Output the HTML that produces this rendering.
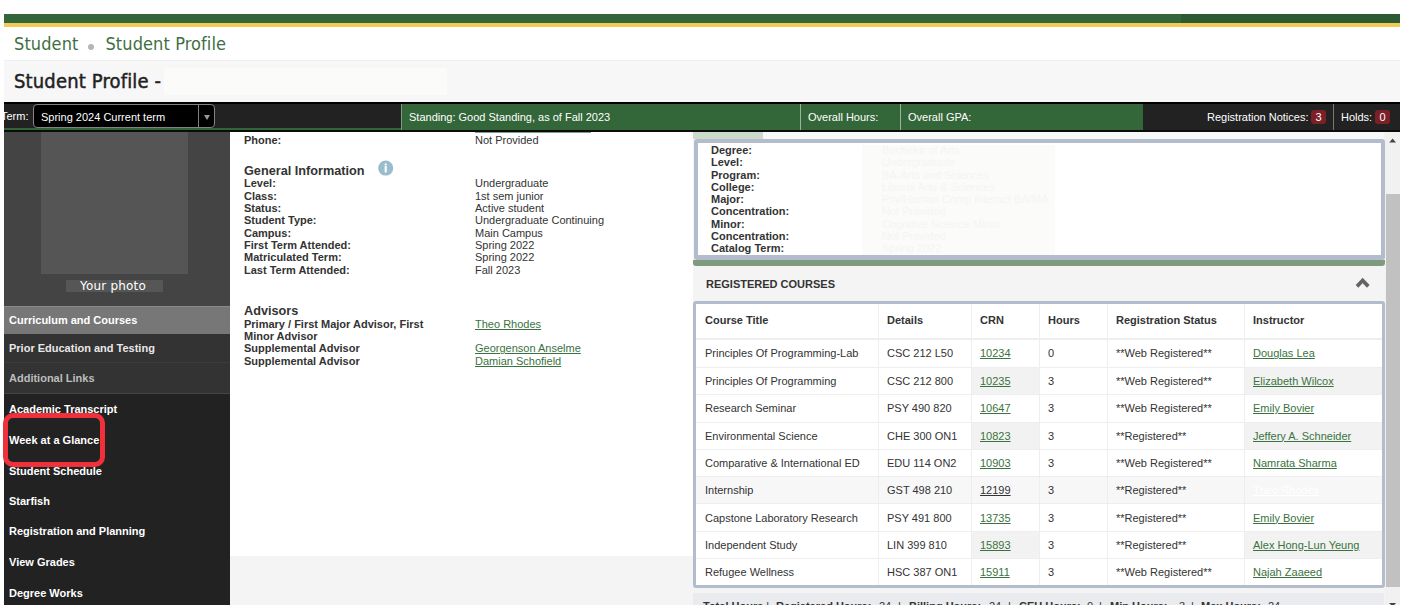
<!DOCTYPE html>
<html lang="en">
<head>
<meta charset="utf-8">
<title>Student Profile</title>
<style>
*{box-sizing:border-box;margin:0;padding:0}
html,body{width:1420px;height:605px;overflow:hidden;background:#fff}
body{font-family:"Liberation Sans",Arial,sans-serif;font-size:11px;color:#333;position:relative}
.abs{position:absolute}
a{color:#3a7240}
/* top bars */
#gbar{left:4px;top:14px;width:1396px;height:9px;background:#33663a}
#gbar2{left:1181px;top:14px;width:219px;height:9px;background:#2d5a33}
#ybar{left:4px;top:23px;width:1396px;height:4px;background:#f1cb55}
#crumb{left:14px;top:32px;font-family:"DejaVu Sans Condensed","DejaVu Sans",sans-serif;font-size:18px;letter-spacing:0.1px;color:#3d6f43;white-space:nowrap;line-height:24px}
#crumb .dot{display:inline-block;width:6px;height:6px;border-radius:3px;background:#b5b5b5;margin:0 11px 0 10px;position:relative;top:0px}
#titlebar{left:4px;top:60px;width:1396px;height:42px;background:#f7f7f7;border-top:1px solid #f0f0f0}
#titlebar .red{position:absolute;left:160px;top:7px;width:283px;height:27px;background:#fbfbfa}
#title{left:14px;top:67px;font-family:"DejaVu Sans Condensed","DejaVu Sans",sans-serif;font-weight:normal;font-size:20px;color:#222;-webkit-text-stroke:0.45px #222;letter-spacing:0.15px;white-space:nowrap;line-height:28px}
/* status bar */
#sbar{left:4px;top:102px;width:1396px;height:30px;background:#222;border-top:2px solid #000;border-bottom:2px solid #0c0c0c}
#sgreen{left:401px;top:104px;width:742px;height:26px;background:#336639;border-left:1px solid #7e9a82}
#sbarline{left:4px;top:128px;width:397px;height:2px;background:#2f6537}
.sb{position:absolute;top:104px;height:26px;line-height:26px;color:#fff;font-size:11px;white-space:nowrap}
.vdiv{position:absolute;top:104px;width:1px;height:26px;background:#9db3a0}
.badge{position:absolute;top:110px;width:15px;height:14px;line-height:14px;border-radius:3px;background:#7d1f27;color:#fff;text-align:center;font-size:11px}
#sel{left:33px;top:104px;width:182px;height:24px;border:1px solid #828282;border-radius:4px;background:#000;color:#fff;line-height:24px;padding-left:7px;font-size:11px;overflow:hidden}
#sel .dv{position:absolute;left:164px;top:0;width:1px;height:22px;background:#828282}
#sel .ar{position:absolute;left:169.5px;top:10px;width:0;height:0;border-left:3px solid transparent;border-right:3px solid transparent;border-top:5px solid #999}
/* sidebar */
#side{left:4px;top:132px;width:226px;height:473px;background:#222}
#phwrap{left:4px;top:132px;width:226px;height:174px;background:#444}
#photo{left:41px;top:132px;width:147px;height:142px;background:#555}
#phlab{left:66px;top:280px;width:97px;height:12px;background:#565656;color:#fff;font-family:"DejaVu Sans",sans-serif;font-size:12px;letter-spacing:0.2px;line-height:12px;text-align:center;padding-right:3px}
.mi{position:absolute;left:4px;width:226px;color:#fff;font-weight:bold;font-size:11px;padding-left:5px;white-space:nowrap}
#m1{top:306px;height:28px;line-height:27px;background:#777;border-top:1px solid #8a8a8a}
#m2{top:334px;height:28px;line-height:28px;background:#333;color:#e8e8e8}
#m3{top:362px;height:32px;line-height:30px;background:#333;color:#bdbdbd;border-top:1px solid #3c3c3c;border-bottom:1px solid #444}
.lk{position:absolute;left:9px;color:#fff;font-weight:bold;font-size:11px;line-height:14px;white-space:nowrap}
#redbox{left:2.5px;top:413px;width:102px;height:53.5px;border:5px solid #f0313c;border-radius:10px}
/* middle */
#mid{left:230px;top:132px;width:462.5px;height:424px;background:#fff}
#midb{left:230px;top:556px;width:462.5px;height:49px;background:#f4f4f4}
.lab{position:absolute;left:244px;font-weight:bold;color:#333;font-size:11px;line-height:12.4px;white-space:nowrap}
.val{position:absolute;left:475px;color:#333;font-size:11px;line-height:12.4px;white-space:nowrap}
.h3{position:absolute;left:244px;font-weight:bold;color:#333;font-size:12.7px;line-height:16px;white-space:nowrap}
/* right */
#right{left:692.5px;top:132px;width:692.5px;height:473px;background:#f4f4f4}
#scroll{left:1385px;top:132px;width:15px;height:473px;background:#f1f1f1}
#thumb{left:1385.5px;top:194px;width:14.5px;height:393px;background:#c1c1c1}

/* degree box */
#rtop{left:691px;top:132px;width:693px;height:8px;background:#f7f8fa}
#rtopg{left:693px;top:132px;width:70px;height:7px;background:#cbdacb}
#dbox{left:693.5px;top:139.3px;width:691.5px;height:121px;border:4.5px solid #b3bccd;border-bottom-width:5px;border-radius:3px;background:#fff}
#dred{left:862px;top:145px;width:192.5px;height:110px;background:#fbfbfa}
#gline{left:693px;top:260px;width:692px;height:6px;background:#7f9b7f;border-radius:0 0 3px 3px}
.dl{position:absolute;left:711px;font-weight:bold;color:#333;font-size:11px;line-height:12px;white-space:nowrap}
.dv2{position:absolute;left:882px;color:#f5f5f3;font-size:11px;line-height:12px;white-space:nowrap}
#rch{left:706px;top:277px;font-weight:bold;font-size:11px;line-height:14px;color:#333;white-space:nowrap}
#tbox{left:693px;top:301px;width:691.5px;height:287px;border:3px solid #b3bccd;border-radius:3px;background:#fff}
table{position:absolute;left:696px;top:303.8px;width:685.5px;border-collapse:separate;border-spacing:0;table-layout:fixed;font-size:11px;color:#333}
th{height:36px;text-align:left;font-weight:bold;padding:0 0 1px 9px;border-left:1px solid #eee;border-bottom:2px solid #eee;vertical-align:middle}
td{height:27.27px;padding:0 0 0 9px;border-left:1px solid #eee;border-top:1px solid #eee;vertical-align:middle;white-space:nowrap}
th:first-child,td:first-child{border-left:none}
th+th,td+td{padding-left:8px}
tr.e td.g{background:#f2f2f2}
tr.h td{background:#f7f7f7}
tr.first td{border-top:none}
#foot{left:692.5px;top:592.5px;width:691px;height:13px;background:#e9ebef}
.ft{position:absolute;top:600px;font-size:11px;line-height:13px;color:#333;white-space:nowrap}
.ft b{font-weight:bold}
</style>
</head>
<body>
<div class="abs" id="gbar"></div><div class="abs" id="gbar2"></div><div class="abs" id="ybar"></div>
<div class="abs" id="crumb">Student<span class="dot"></span>Student Profile</div>
<div class="abs" id="titlebar"><div class="red"></div></div>
<div class="abs" id="title">Student Profile -</div>

<div class="abs" id="sbar"></div>
<div class="abs" id="sgreen"></div>
<div class="abs" id="sbarline"></div>
<div class="sb" style="left:1px;top:103px">Term:</div>
<div class="abs" id="sel">Spring 2024 Current term<span class="dv"></span><span class="ar"></span></div>
<div class="sb" style="left:409px">Standing: Good Standing, as of Fall 2023</div>
<div class="vdiv" style="left:800px"></div>
<div class="sb" style="left:808px">Overall Hours:</div>
<div class="vdiv" style="left:900px"></div>
<div class="sb" style="left:908px">Overall GPA:</div>
<div class="sb" style="left:1207px">Registration Notices:</div>
<div class="badge" style="left:1311px">3</div>
<div class="vdiv" style="left:1333px;background:#777"></div>
<div class="sb" style="left:1341px">Holds:</div>
<div class="badge" style="left:1375px">0</div>

<!-- sidebar -->
<div class="abs" id="side"></div>
<div class="abs" id="phwrap"></div>
<div class="abs" id="photo"></div>
<div class="abs" id="phlab">Your photo</div>
<div class="mi" id="m1">Curriculum and Courses</div>
<div class="mi" id="m2">Prior Education and Testing</div>
<div class="mi" id="m3">Additional Links</div>
<div class="lk" style="top:402px">Academic Transcript</div>
<div class="lk" style="top:433px">Week at a Glance</div>
<div class="lk" style="top:464px">Student Schedule</div>
<div class="lk" style="top:494px">Starfish</div>
<div class="lk" style="top:524px">Registration and Planning</div>
<div class="lk" style="top:555px">View Grades</div>
<div class="lk" style="top:586px">Degree Works</div>
<div class="abs" id="redbox"></div>

<!-- middle -->
<div class="abs" id="mid"></div>
<div class="abs" id="midb"></div>

<div class="lab" style="top:133.9px">Phone:</div><div class="val" style="top:133.9px">Not Provided</div>
<div class="h3" style="top:163.2px">General Information</div>
<svg class="abs" style="left:377px;top:160px" width="17" height="17" viewBox="0 0 17 17"><circle cx="8.7" cy="8.05" r="7.55" fill="#9abdcc"/><rect x="7.65" y="5.9" width="2.1" height="6.5" fill="#fff"/><circle cx="8.7" cy="4.4" r="1.05" fill="#fff"/></svg>
<div class="lab" style="top:177.2px">Level:</div><div class="val" style="top:177.2px">Undergraduate</div>
<div class="lab" style="top:189.6px">Class:</div><div class="val" style="top:189.6px">1st sem junior</div>
<div class="lab" style="top:201.9px">Status:</div><div class="val" style="top:201.9px">Active student</div>
<div class="lab" style="top:214.3px">Student Type:</div><div class="val" style="top:214.3px">Undergraduate Continuing</div>
<div class="lab" style="top:226.6px">Campus:</div><div class="val" style="top:226.6px">Main Campus</div>
<div class="lab" style="top:239.0px">First Term Attended:</div><div class="val" style="top:239.0px">Spring 2022</div>
<div class="lab" style="top:251.4px">Matriculated Term:</div><div class="val" style="top:251.4px">Spring 2022</div>
<div class="lab" style="top:263.7px">Last Term Attended:</div><div class="val" style="top:263.7px">Fall 2023</div>
<div class="h3" style="top:303.4px">Advisors</div>
<div class="lab" style="top:317.5px">Primary / First Major Advisor, First</div><div class="val" style="top:317.5px"><a href="#">Theo Rhodes</a></div>
<div class="lab" style="top:329.9px">Minor Advisor</div>
<div class="lab" style="top:342.2px">Supplemental Advisor</div><div class="val" style="top:342.2px"><a href="#">Georgenson Anselme</a></div>
<div class="lab" style="top:354.6px">Supplemental Advisor</div><div class="val" style="top:354.6px"><a href="#">Damian Schofield</a></div>
<div class="abs" style="left:475px;top:132px;width:116px;height:1px;background:#7c9f82"></div>
<!-- right -->
<div class="abs" id="right"></div>

<div class="abs" id="rtop"></div><div class="abs" id="rtopg"></div>
<div class="abs" id="dbox"></div>
<div class="abs" id="dred"></div>
<div class="abs" id="gline"></div>
<div class="dl" style="top:143.9px">Degree:</div><div class="dv2" style="top:143.9px">Bachelor of Arts</div>
<div class="dl" style="top:156.2px">Level:</div><div class="dv2" style="top:156.2px">Undergraduate</div>
<div class="dl" style="top:168.5px">Program:</div><div class="dv2" style="top:168.5px">BA-Arts and Sciences</div>
<div class="dl" style="top:180.8px">College:</div><div class="dv2" style="top:180.8px">Liberal Arts &amp; Sciences</div>
<div class="dl" style="top:193.1px">Major:</div><div class="dv2" style="top:193.1px">Psy/Human Comp Interact BA/MA</div>
<div class="dl" style="top:205.3px">Concentration:</div><div class="dv2" style="top:205.3px">Not Provided</div>
<div class="dl" style="top:217.6px">Minor:</div><div class="dv2" style="top:217.6px">Cognitive Science Minor</div>
<div class="dl" style="top:229.9px">Concentration:</div><div class="dv2" style="top:229.9px">Not Provided</div>
<div class="dl" style="top:242.2px">Catalog Term:</div><div class="dv2" style="top:242.2px">Spring 2022</div>
<div class="abs" id="rch">REGISTERED COURSES</div>
<svg class="abs" style="left:1355px;top:277px" width="16" height="12" viewBox="0 0 16 12"><path d="M2.0 9.35 L7.65 3.5 L13.3 9.35" fill="none" stroke="#646464" stroke-width="3.7" stroke-linejoin="miter"/></svg>
<div class="abs" id="tbox"></div>
<table>
<colgroup><col style="width:182px"><col style="width:93px"><col style="width:68px"><col style="width:68px"><col style="width:137px"><col></colgroup>
<tr><th>Course Title</th><th>Details</th><th>CRN</th><th>Hours</th><th>Registration Status</th><th>Instructor</th></tr>
<tr class="o first"><td>Principles Of Programming-Lab</td><td>CSC 212 L50</td><td class="g"><a href="#">10234</a></td><td>0</td><td>**Web Registered**</td><td class="g"><a href="#">Douglas Lea</a></td></tr>
<tr class="e"><td>Principles Of Programming</td><td>CSC 212 800</td><td class="g"><a href="#">10235</a></td><td>3</td><td>**Web Registered**</td><td class="g"><a href="#">Elizabeth Wilcox</a></td></tr>
<tr class="o"><td>Research Seminar</td><td>PSY 490 820</td><td class="g"><a href="#">10647</a></td><td>3</td><td>**Web Registered**</td><td class="g"><a href="#">Emily Bovier</a></td></tr>
<tr class="e"><td>Environmental Science</td><td>CHE 300 ON1</td><td class="g"><a href="#">10823</a></td><td>3</td><td>**Registered**</td><td class="g"><a href="#">Jeffery A. Schneider</a></td></tr>
<tr class="o"><td>Comparative &amp; International ED</td><td>EDU 114 ON2</td><td class="g"><a href="#">10903</a></td><td>3</td><td>**Web Registered**</td><td class="g"><a href="#">Namrata Sharma</a></td></tr>
<tr class="h"><td>Internship</td><td>GST 498 210</td><td class="g"><a href="#" style="color:#333">12199</a></td><td>3</td><td>**Registered**</td><td class="g"><a href="#" style="color:#fff">Theo Rhodes</a></td></tr>
<tr class="o"><td>Capstone Laboratory Research</td><td>PSY 491 800</td><td class="g"><a href="#">13735</a></td><td>3</td><td>**Registered**</td><td class="g"><a href="#">Emily Bovier</a></td></tr>
<tr class="e"><td>Independent Study</td><td>LIN 399 810</td><td class="g"><a href="#">15893</a></td><td>3</td><td>**Registered**</td><td class="g"><a href="#">Alex Hong-Lun Yeung</a></td></tr>
<tr class="o"><td>Refugee Wellness</td><td>HSC 387 ON1</td><td class="g"><a href="#">15911</a></td><td>3</td><td>**Web Registered**</td><td class="g"><a href="#">Najah Zaaeed</a></td></tr>
</table>
<div class="abs" id="foot"></div>
<div class="ft" style="left:703px"><b>Total Hours</b> |</div>
<div class="ft" style="left:776px"><b>Registered Hours:</b></div>
<div class="ft" style="left:879px">24</div>
<div class="ft" style="left:898px">|</div>
<div class="ft" style="left:909px"><b>Billing Hours:</b></div>
<div class="ft" style="left:989px">24</div>
<div class="ft" style="left:1008px">|</div>
<div class="ft" style="left:1019px"><b>CEU Hours:</b></div>
<div class="ft" style="left:1087px">0</div>
<div class="ft" style="left:1099px">|</div>
<div class="ft" style="left:1110px"><b>Min Hours:</b></div>
<div class="ft" style="left:1179px">3</div>
<div class="ft" style="left:1191px">|</div>
<div class="ft" style="left:1201px"><b>Max Hours:</b></div>
<div class="ft" style="left:1268px">24</div>
<div class="abs" id="scroll"></div>
<div class="abs" id="thumb"></div>
<svg class="abs" style="left:1385px;top:136px" width="15" height="9" viewBox="0 0 15 9"><path d="M4.2 6.5 L7.6 2.6 L11 6.5 Z" fill="#454545"/></svg>
<svg class="abs" style="left:1385px;top:600px" width="15" height="9" viewBox="0 0 15 9"><path d="M4.2 3 L11 3 L7.6 6.9 Z" fill="#454545"/></svg>
</body>
</html>
